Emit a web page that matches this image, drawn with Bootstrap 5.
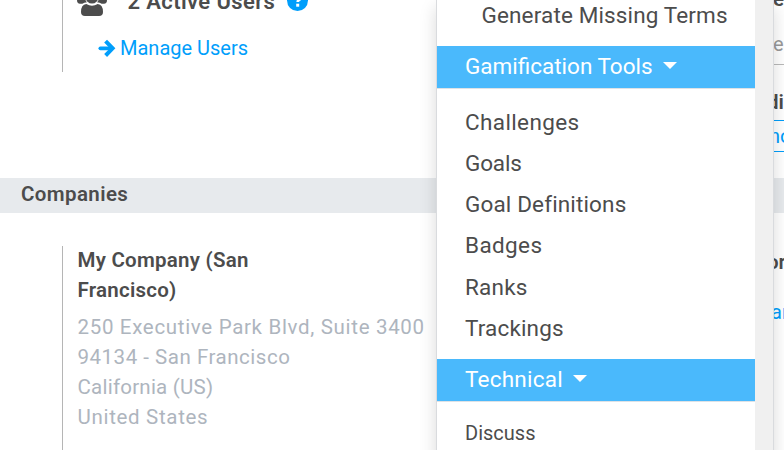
<!DOCTYPE html>
<html lang="en">
<head>
<meta charset="utf-8">
<title>Settings</title>
<link rel="stylesheet" href="https://cdn.jsdelivr.net/npm/bootstrap@5.3.0/dist/css/bootstrap.min.css">
<style>
body{width:784px;height:450px;overflow:hidden;font-family:Roboto,"Open Sans",sans-serif;font-size:20px;color:#4c4c4c;background:#fff;white-space:nowrap}
.page{height:450px}
.blue{color:#009efb}
.strong-label{font-weight:600;font-size:20.5px;line-height:30px}
.top-row{height:178px}
.setting{margin-left:62px;width:374px;border-left:1px solid #b5b5b5}
.users-box{height:72px}
.users-head{height:22px;margin:-13px 0 0 14px}
.users-head svg{flex:none}
.users-title{font-size:22px;font-weight:600;line-height:30px;margin:0 12px 0 20.500px;letter-spacing:.38px}
.help-mark{margin-top:3px}
.manage{margin:24px 0 0 35px;line-height:30px;letter-spacing:0}
.section-bar{height:35px;background:#e7eaed;padding-left:21px}
.section-bar h2{font-size:20.5px;letter-spacing:.4px;line-height:32px}
.company-box{height:204px;margin-top:33px;padding-left:14.5px}
.company-name{margin-top:-1px;letter-spacing:.25px}
.address{font-size:20.5px;line-height:30px;color:#aeb5be;padding-top:7px}
.side{width:10px;overflow:hidden}
.side div{width:60px}
.side-title{margin-top:-16px;margin-left:-1px}
.side-value{line-height:30px;margin-top:15px;margin-left:-1px;color:#999}
.side-line{border-top:1px solid #b9b9b9;margin-top:5px;height:23px}
.side-label{margin-left:-7px}
.side-field{border-top:1px solid #009efb;border-bottom:1px solid #009efb;margin-top:3px;height:32px;line-height:31px;text-indent:-5px}
.side-company{margin-top:34px;margin-left:-7px}
.side-link{margin-top:20px;line-height:30px;margin-left:-3px}
.menu{left:436px;top:-1px;width:338px;height:460px;border:1px solid #d9dbde;box-shadow:0 8px 16px rgba(0,0,0,.15);font-size:22.5px;background:#fff}
.menu-list{width:318px;overflow:hidden}
.menu-track{width:18px;background:#f0f0f0}
.menu a{display:block;color:#4c4c4c;text-decoration:none;line-height:41.25px;padding-left:28px}
.menu .sub-entry{padding-left:44.5px;margin-top:-5px;margin-bottom:9.75px;letter-spacing:.14px}
.menu .group-head{height:42px;background:#4ab9fc;color:#fff;line-height:41px;box-shadow:0 1px #dee2e6}
.group-head svg{margin-left:10.500px;vertical-align:5px;display:inline-block}
.group-items{padding:13.5px 0 10px;height:271px}
.menu .discuss{font-size:20px;line-height:30px;margin-top:17px;letter-spacing:0}
.ls-0{letter-spacing:-.15px}.ls-1{letter-spacing:.15px}.ls-2{letter-spacing:.23px}.ls-3{letter-spacing:.38px}.ls-4{letter-spacing:.68px}.ls-6{letter-spacing:.52px}
</style>
</head>
<body>
<div class="page position-relative overflow-hidden">
  <div class="top-row d-flex justify-content-between">
    <div class="setting users-box">
      <div class="users-head d-flex">
        <svg width="30" height="30" viewBox="0 0 30 30" fill="#4c4c4c"><circle cx="6" cy="5" r="4"/><circle cx="24" cy="5" r="4"/><circle cx="15" cy="10.300" r="6.300"/><path d="M0 13q0-4 2.500-4Q5 11 8 10.400q0 3 2 4.900-3 .2-4.600 1.500H3q-3 0-3-3.800ZM30 13q0-4-2.500-4Q25 11 22 10.400q0 3-2 4.900 3 .2 4.600 1.500H27q3 0 3-3.800ZM9.300 17q5.700 3.400 11.400 0Q26 17.500 26 25q0 4-4 4H8q-4 0-4-4 0-7.500 5.300-8Z"/></svg>
        <span class="users-title">2 Active Users</span>
        <svg width="21" height="21" viewBox="0 0 21 21" class="help-mark align-self-start"><circle cx="10.500" cy="10.500" r="10.500" fill="#009efb"/><path d="M6.800 7q1.200-2.500 3.800-2.500 3.400 0 3.400 2.800 0 1.400-1.700 2.300-1.500.8-1.500 2.300" fill="none" stroke="#fff" stroke-width="2.800"/><path d="M9.200 13.700h3v3h-3z" fill="#fff"/></svg>
      </div>
      <div class="manage blue d-flex align-items-center"><svg class="me-1" width="18" height="18" viewBox="0 0 18 18" fill="none" stroke="#009efb"><path stroke-width="3.800" stroke-linecap="round" d="M2.400 9.300H13"/><path stroke-width="4" d="m7.600 2.100 7 7.200-7 7.200"/></svg>Manage Users</div>
    </div>
    <div class="side">
      <div class="side-title strong-label">e</div>
      <div class="side-value">e</div>
      <div class="side-line"></div>
      <div class="side-label strong-label">di</div>
      <div class="side-field blue">no</div>
    </div>
  </div>
  <div class="section-bar"><h2 class="mb-0 strong-label">Companies</h2></div>
  <div class="d-flex justify-content-between">
    <div class="setting company-box">
      <div class="company-name strong-label">My Company (San<br>Francisco)</div>
      <div class="address"><div class="ls-4">250 Executive Park Blvd, Suite 3400</div><div class="ls-6">94134 - San Francisco</div><div class="ls-2">California (US)</div><div class="ls-4">United States</div></div>
    </div>
    <div class="side">
      <div class="side-company strong-label">or</div>
      <div class="side-link blue">an</div>
    </div>
  </div>
  <nav class="menu position-absolute d-flex" aria-label="Menu">
    <div class="menu-list">
      <a href="#" class="sub-entry">Generate Missing Terms</a>
      <a href="#" class="group-head">Gamification Tools<svg width="14" height="7" viewBox="0 0 14 7" fill="#fff"><path d="M0 0h14L7 7z"/></svg></a>
      <div class="group-items">
        <a href="#" class="ls-3">Challenges</a>
        <a href="#" class="ls-0">Goals</a>
        <a href="#" class="ls-1">Goal Definitions</a>
        <a href="#" class="ls-3">Badges</a>
        <a href="#" class="ls-2">Ranks</a>
        <a href="#" class="ls-1">Trackings</a>
      </div>
      <a href="#" class="group-head ls-2">Technical<svg width="14" height="7" viewBox="0 0 14 7" fill="#fff"><path d="M0 0h14L7 7z"/></svg></a>
      <a href="#" class="discuss">Discuss</a>
    </div>
    <div class="menu-track"></div>
  </nav>
</div>
<script src="https://cdn.jsdelivr.net/npm/bootstrap@5.3.0/dist/js/bootstrap.bundle.min.js"></script>
</body>
</html>
